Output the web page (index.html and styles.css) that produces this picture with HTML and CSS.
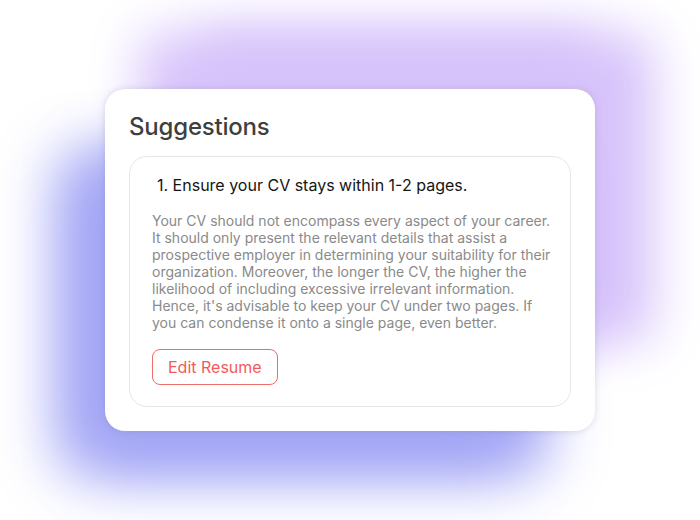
FILE: index.html
```html
<!DOCTYPE html>
<html>
<head>
<meta charset="utf-8">
<link rel="stylesheet" href="styles.css">
</head>
<body>
<div class="stage">
  <div class="card">
    <h1 class="title">Suggestions</h1>
    <div class="item">
      <h2 class="item-title">1. Ensure your CV stays within 1-2 pages.</h2>
      <p class="item-text">Your CV should not encompass every aspect of your career. It should only present the relevant details that assist a prospective employer in determining your suitability for their organization. Moreover, the longer the CV, the higher the likelihood of including excessive irrelevant information. Hence, it's advisable to keep your CV under two pages. If you can condense it onto a single page, even better.</p>
      <button class="btn">Edit Resume</button>
    </div>
  </div>
</div>
</body>
</html>
```

FILE: styles.css
```css
html, body {
  margin: 0;
  padding: 0;
  background: #ffffff;
  font-family: Inter, "Noto Sans", sans-serif;
}
.stage {
  width: 700px;
  height: 520px;
  padding: 89px 0 0 105px;
  box-sizing: border-box;
  overflow: hidden;
}
.card {
  width: 490px;
  height: 342px;
  box-sizing: border-box;
  padding: 23px 24px 24px 24px;
  background: #ffffff;
  border-radius: 20px;
  display: flex;
  flex-direction: column;
  box-shadow:
    0 0 6px rgba(120, 120, 140, 0.25),
    -62px 52px 62px -16px #a2a5f5,
    -34px 52px 62px -16px #a2a5f5,
    17px -72px 52px -18px #d7c3fb,
    76px -72px 52px -18px #d7c3fb;
}
.title {
  margin: 0 0 14px 0;
  font-size: 24px;
  line-height: 30px;
  font-weight: 500;
  color: #3f3f3f;
  letter-spacing: -0.2px;
}
.item {
  flex: 1;
  border: 1px solid #e6e6e6;
  border-radius: 18px;
  padding: 17px 22px 21px 22px;
  display: flex;
  flex-direction: column;
  align-items: flex-start;
}
.item-title {
  margin: 0 0 16px 5px;
  font-size: 16px;
  line-height: 22px;
  font-weight: 400;
  color: #151515;
}
.item-text {
  margin: 0 0 18px 0;
  width: 402px;
  font-size: 14px;
  line-height: 17px;
  color: #8a8a8a;
}
.btn {
  height: 36px;
  padding: 0 15px;
  border: 1px solid #f26a6a;
  border-radius: 8px;
  background: #ffffff;
  color: #f25a5a;
  font-family: Inter, "Noto Sans", sans-serif;
  font-size: 16px;
  line-height: 22px;
}
```
